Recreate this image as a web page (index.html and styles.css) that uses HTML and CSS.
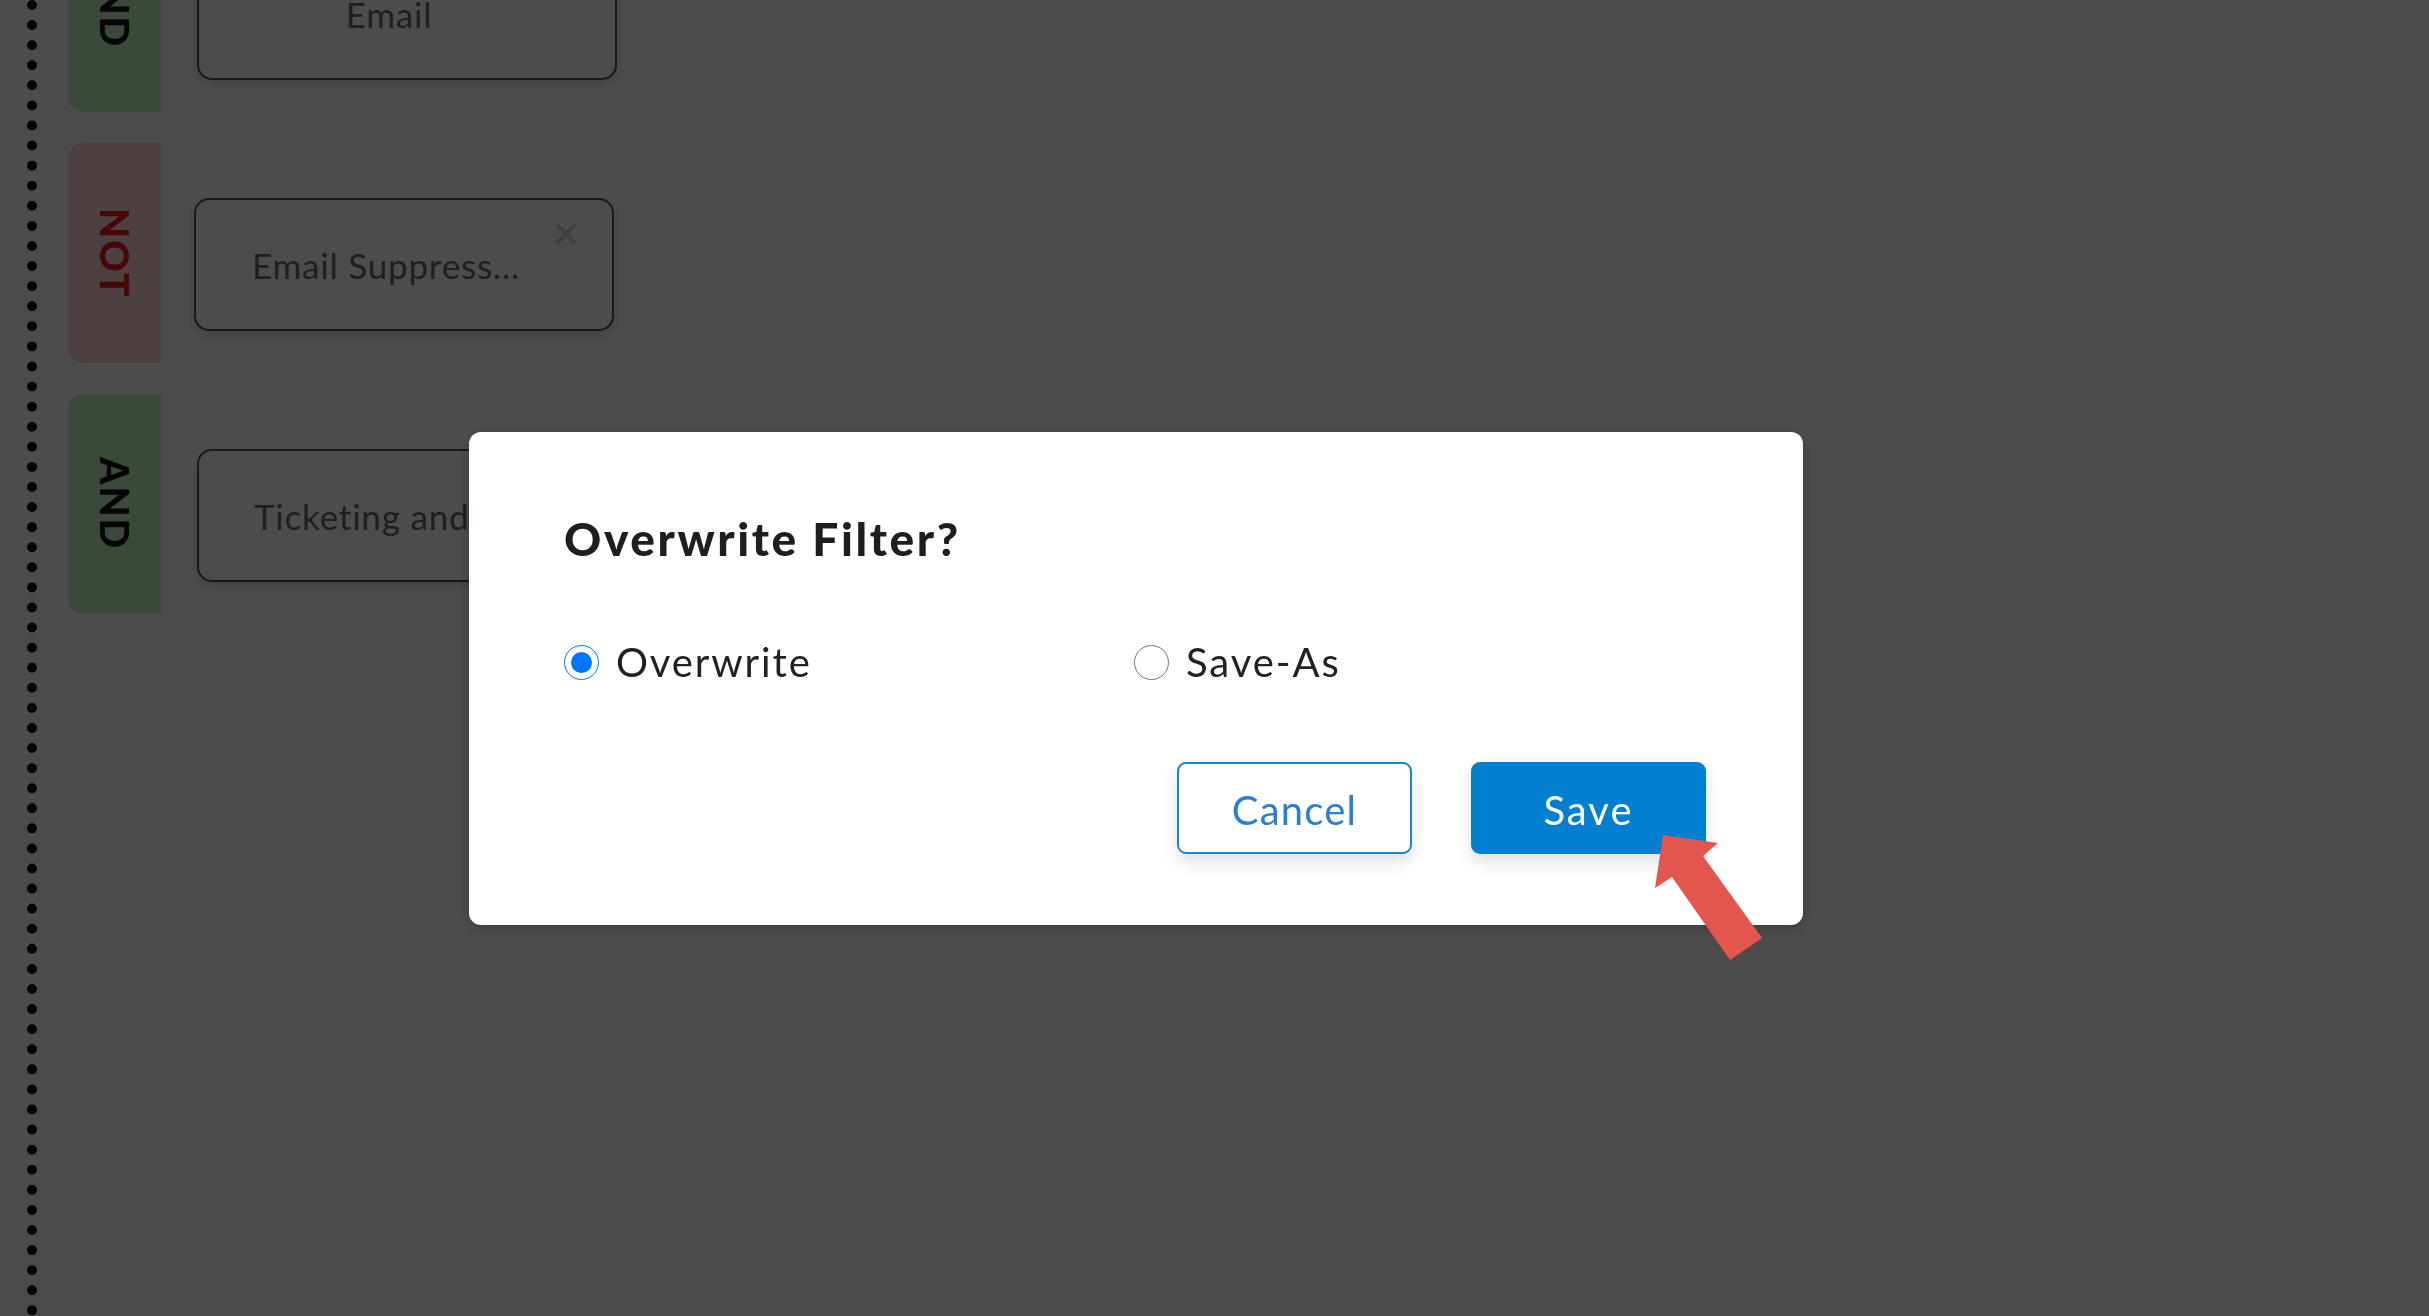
FILE: index.html
```
<!DOCTYPE html>
<html lang="en">
<head>
    <meta charset="UTF-8">
    <meta name="viewport" content="width=device-width, initial-scale=1.0">
    <title>Filter Builder</title>
    <link rel="stylesheet" href="styles.css">
</head>
<body>
    <div class="builder">
        <div class="timeline"></div>

        <!-- Filter conditions -->
        <div class="conditions">
            <div class="condition">
                <div class="operator and">AND</div>
                <div class="segment-card">
                    <span class="segment-name">Email</span>
                </div>
            </div>
            <div class="condition">
                <div class="operator not">NOT</div>
                <div class="segment-card shifted">
                    <span class="segment-name">Email Suppress...</span>
                    <span class="remove">
                        <svg viewBox="0 0 22 22" width="22" height="22"><path d="M3 3 L19 19 M19 3 L3 19" stroke="#d4d4d4" stroke-width="4" stroke-linecap="round"/></svg>
                    </span>
                </div>
            </div>
            <div class="condition">
                <div class="operator and">AND</div>
                <div class="segment-card">
                    <span class="segment-name">Ticketing and Support</span>
                </div>
            </div>
        </div>
    </div>

    <!-- Save dialog -->
    <div class="overlay">
        <div class="modal">
            <h2 class="modal-title">Overwrite Filter?</h2>
            <div class="options">
                <label class="option">
                    <input type="radio" name="saveMode" value="overwrite" checked>
                    <span>Overwrite</span>
                </label>
                <label class="option">
                    <input type="radio" name="saveMode" value="saveas">
                    <span>Save-As</span>
                </label>
            </div>
            <div class="actions">
                <button class="btn btn-cancel">Cancel</button>
                <button class="btn btn-save">Save</button>
            </div>
        </div>

        <!-- annotation arrow -->
        <svg class="pointer" viewBox="0 0 120 140" width="120" height="140">
            <polygon points="13,5 68,13 53,26 112,108 80,130 22,47 5,58" fill="#e2564d"/>
        </svg>
    </div>
</body>
</html>
```

FILE: styles.css
```
body {
    font-family: Lato, "Open Sans", sans-serif;
    margin: 0;
    padding: 0;
    background-color: #fff;
    overflow: hidden;
    height: 100vh;
}
.builder {
    display: flex;
    height: 100vh;
    padding-left: 27px;
}
.timeline {
    border-left: 10px dotted #111;
    height: 100%;
}
.conditions {
    flex: 1;
    margin-left: 31px;
    margin-top: -108px;
    display: flex;
    flex-direction: column;
    gap: 31px;
}
.condition {
    display: flex;
    height: 220px;
}
.operator {
    width: 93px;
    border-radius: 15px 0 0 15px;
    writing-mode: vertical-rl;
    display: flex;
    align-items: center;
    justify-content: center;
    font-size: 39px;
    font-weight: 900;
    letter-spacing: 2px;
}
.operator.and {
    background-color: #c6f6c6;
    color: #141414;
}
.operator.not {
    background-color: #ffd6d6;
    color: #f01818;
}
.segment-card {
    position: relative;
    box-sizing: border-box;
    width: 420px;
    height: 133px;
    margin: 55px 0 0 36px;
    padding: 0 91px 0 55px;
    display: flex;
    align-items: center;
    border: 2px solid #555;
    border-radius: 15px;
    box-shadow: 0 4px 8px rgba(0, 0, 0, 0.15);
    background-color: #fff;
}
.segment-card.shifted {
    margin-left: 33px;
}
.segment-name {
    flex: 1;
    text-align: center;
    white-space: nowrap;
    overflow: hidden;
    font-size: 35px;
    letter-spacing: 0.8px;
    color: #6a6a6a;
}
.remove {
    position: absolute;
    top: 23px;
    right: 35px;
    width: 22px;
    height: 22px;
}
.remove svg {
    display: block;
}

.overlay {
    position: fixed;
    top: 0;
    left: 0;
    width: 100%;
    height: 100%;
    background-color: rgba(0, 0, 0, 0.7);
}
.modal {
    position: absolute;
    left: 469px;
    top: 432px;
    width: 1334px;
    box-sizing: border-box;
    padding: 79px 97px 71px 95px;
    background-color: #fff;
    border-radius: 12px;
    box-shadow: 0 4px 12px rgba(0, 0, 0, 0.2);
}
.modal-title {
    margin: 0;
    font-size: 46px;
    line-height: 55px;
    font-weight: 900;
    letter-spacing: 2.6px;
    color: #1e1e1e;
}
.options {
    display: grid;
    grid-template-columns: 570px 1fr;
    margin-top: 72px;
}
.option {
    display: flex;
    align-items: center;
    font-size: 40px;
    line-height: 48px;
    letter-spacing: 1.9px;
    color: #222;
    cursor: pointer;
}
.option input {
    width: 35px;
    height: 35px;
    margin: 0 17px 0 0;
    accent-color: #0075ff;
}
.actions {
    display: flex;
    justify-content: flex-end;
    gap: 59px;
    margin-top: 76px;
}
.btn {
    width: 235px;
    height: 92px;
    padding-top: 5px;
    font-family: Lato, "Open Sans", sans-serif;
    font-size: 40px;
    border-radius: 9px;
    cursor: pointer;
    box-shadow: 0 8px 16px rgba(0, 0, 0, 0.12);
}
.btn-cancel {
    background-color: #fff;
    border: 2px solid #1a84d3;
    color: #2a7fd4;
    letter-spacing: 1.2px;
}
.btn-save {
    background-color: #0280cf;
    border: 2px solid #0280cf;
    color: #fff;
    letter-spacing: 2px;
}
.pointer {
    position: absolute;
    left: 1650px;
    top: 830px;
}
```
